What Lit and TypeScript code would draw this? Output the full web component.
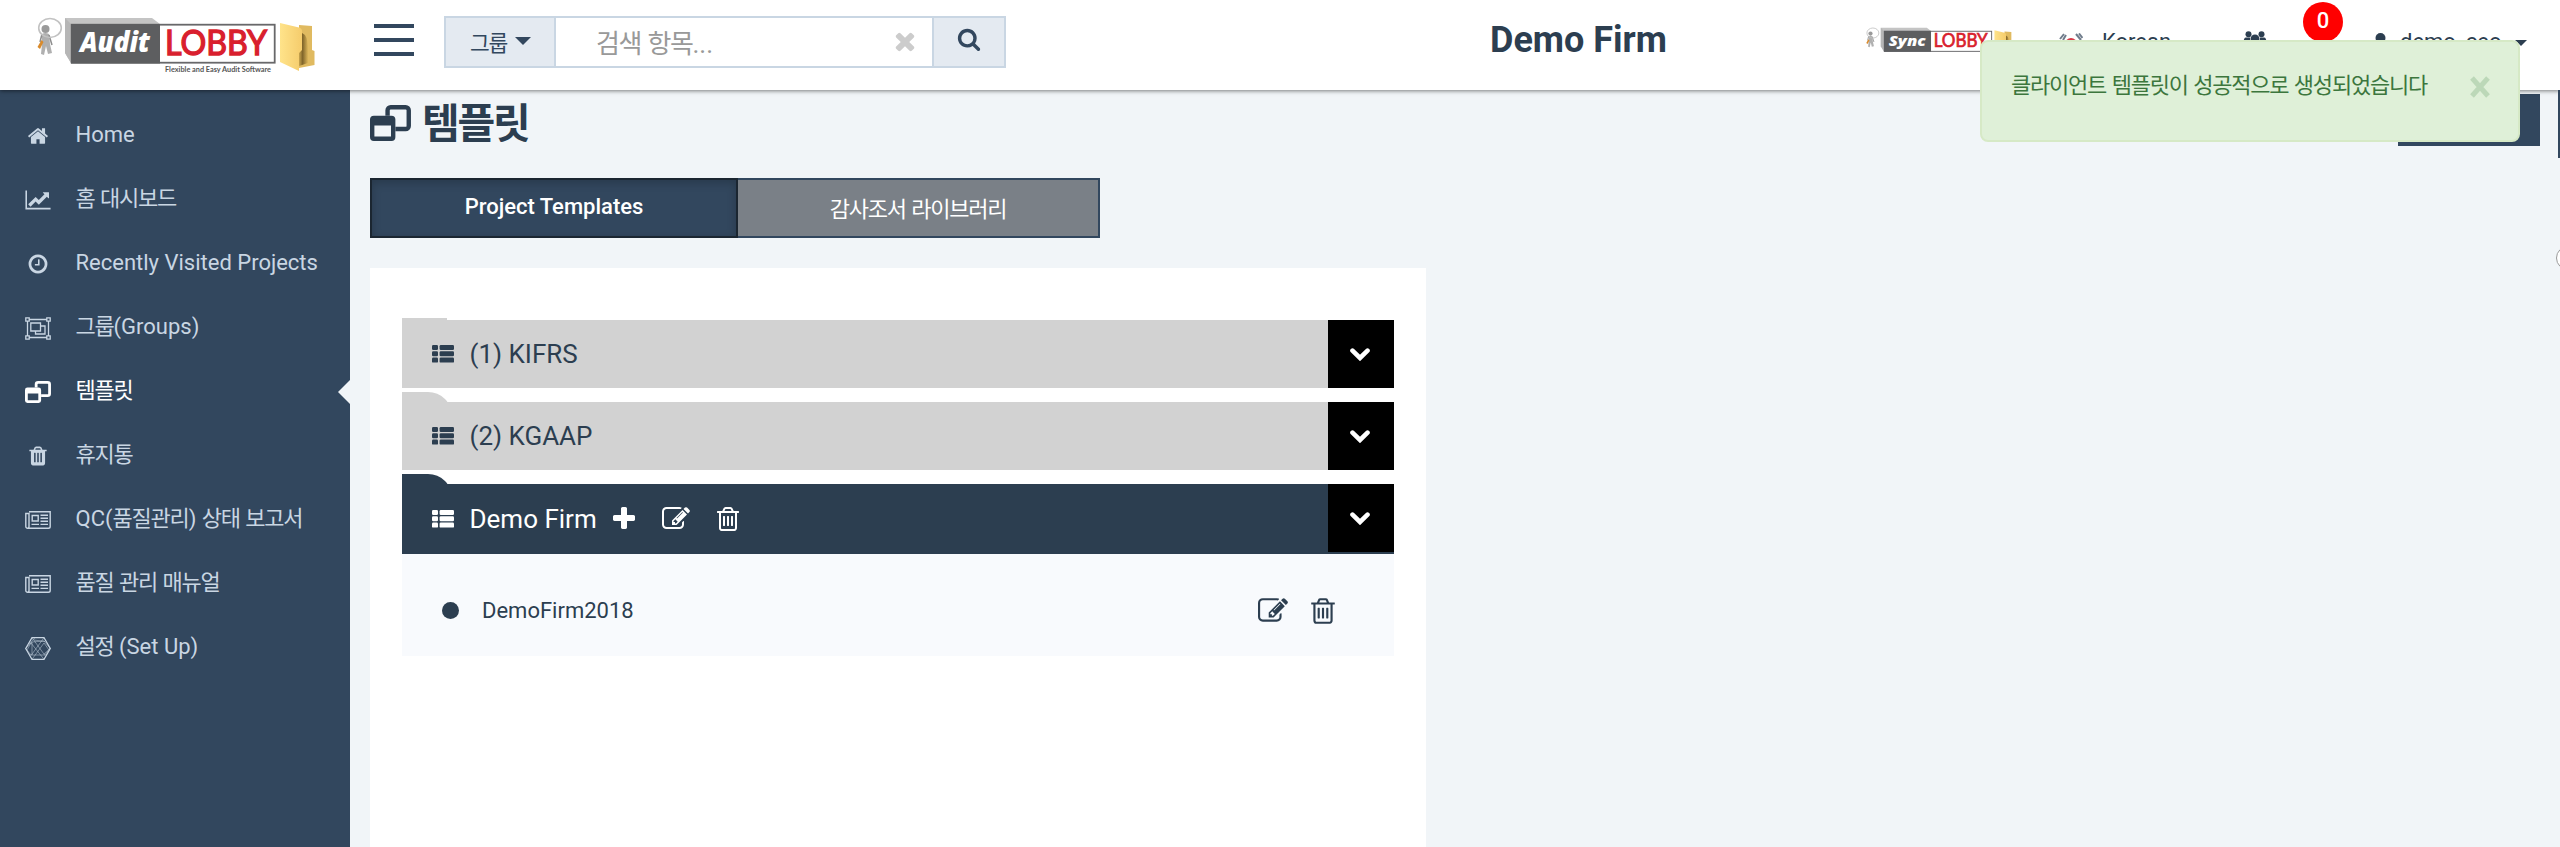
import { LitElement, html, svg, css } from "lit";
import { customElement, property } from "lit/decorators.js";

const TRASH_TAIL =
  "m-672-1076h448l-48-117q-7-9-17-11h-317q-10 2-17 11zm928 32v64q0 14-9 23t-23 9h-96v948q0 83-47 143.5t-113 60.5h-832q-66 0-113-58.5t-47-141.5v-952h-96q-14 0-23-9t-9-23v-64q0-14 9-23t23-9h309l70-167q15-37 54-63t79-26h320q40 0 79 26t54 63l70 167h309q14 0 23 9t9 23z";

const PATHS: Record<string, string> = {
  home: "M1472 992v480q0 26-19 45t-45 19h-384v-384h-256v384h-384q-26 0-45-19t-19-45v-480q0-1 .5-3t.5-3l575-474 575 474q1 2 1 6zm223-69l-62 74q-8 9-21 11h-3q-13 0-21-7l-692-577-692 577q-12 8-24 7-13-2-21-11l-62-74q-8-10-7-23.5t11-21.5l719-599q32-26 76-26t76 26l244 204v-195q0-14 9-23t23-9h192q14 0 23 9t9 23v408l219 182q10 8 11 21.5t-7 23.5z",
  clock: "M1024 544v448q0 14-9 23t-23 9h-320q-14 0-23-9t-9-23v-64q0-14 9-23t23-9h224v-352q0-14 9-23t23-9h64q14 0 23 9t9 23zm416 352q0-148-73-273t-198-198-273-73-273 73-198 198-73 273 73 273 198 198 273 73 273-73 198-198 73-273zm224 0q0 209-103 385.5t-279.5 279.5-385.5 103-385.5-103-279.5-279.5-103-385.5 103-385.5 279.5-279.5 385.5-103 385.5 103 279.5 279.5 103 385.5z",
  trash: "M704 1376v-704q0-14-9-23t-23-9h-64q-14 0-23 9t-9 23v704q0 14 9 23t23 9h64q14 0 23-9t9-23zm256 0v-704q0-14-9-23t-23-9h-64q-14 0-23 9t-9 23v704q0 14 9 23t23 9h64q14 0 23-9t9-23zm256 0v-704q0-14-9-23t-23-9h-64q-14 0-23 9t-9 23v704q0 14 9 23t23 9h64q14 0 23-9t9-23zM1344 1460" + TRASH_TAIL,
  trashO: "M704 736v576q0 14-9 23t-23 9h-64q-14 0-23-9t-9-23v-576q0-14 9-23t23-9h64q14 0 23 9t9 23zm256 0v576q0 14-9 23t-23 9h-64q-14 0-23-9t-9-23v-576q0-14 9-23t23-9h64q14 0 23 9t9 23zm256 0v576q0 14-9 23t-23 9h-64q-14 0-23-9t-9-23v-576q0-14 9-23t23-9h64q14 0 23 9t9 23zm128 724v-948h-896v948q0 22 7 40.5t14.5 27 10.5 8.5h832q3 0 10.5-8.5t14.5-27 7-40.5z" + TRASH_TAIL,
  plus: "M1600 736v192q0 40-28 68t-68 28h-416v416q0 40-28 68t-68 28h-192q-40 0-68-28t-28-68v-416h-416q-40 0-68-28t-28-68v-192q0-40 28-68t68-28h416v-416q0-40 28-68t68-28h192q40 0 68 28t28 68v416h416q40 0 68 28t28 68z",
  edit: "M888 1184l116-116-152-152-116 116v56h96v96h56zm440-720q-16-16-33 1l-350 350q-17 17-1 33t33-1l350-350q17-17 1-33zm80 594v190q0 119-84.5 203.5t-203.5 84.5h-832q-119 0-203.5-84.5t-84.5-203.5v-832q0-119 84.5-203.5t203.5-84.5h832q63 0 117 25 15 7 18 23 3 17-9 29l-49 49q-14 14-32 8-23-6-45-6h-832q-66 0-113 47t-47 113v832q0 66 47 113t113 47h832q66 0 113-47t47-113v-126q0-13 9-22l64-64q15-15 35-7t20 29zm-96-738l288 288-672 672h-288v-288zm444 132l-92 92-288-288 92-92q28-28 68-28t68 28l152 152q28 28 28 68t-28 68z",
  search: "M1216 832q0-185-131.5-316.5t-316.5-131.5-316.5 131.5-131.5 316.5 131.5 316.5 316.5 131.5 316.5-131.5 131.5-316.5zm512 832q0 52-38 90t-90 38q-54 0-90-38l-343-342q-179 124-399 124-143 0-273.5-55.5t-225-150-150-225-55.5-273.5 55.5-273.5 150-225 225-150 273.5-55.5 273.5 55.5 225 150 150 225 55.5 273.5q0 220-124 399l343 343q37 37 37 90z",
  times: "M1490 1322q0 40-28 68l-136 136q-28 28-68 28t-68-28l-294-294-294 294q-28 28-68 28t-68-28l-136-136q-28-28-28-68t28-68l294-294-294-294q-28-28-28-68t28-68l136-136q28-28 68-28t68 28l294 294 294-294q28-28 68-28t68 28l136 136q28 28 28 68t-28 68l-294 294 294 294q28 28 28 68z",
};

const CHART =
  "M2048 1536v128h-2048v-1536h128v1408h1920zm-128-1248v435q0 21-19.5 29.5t-35.5-7.5l-121-121-633 633q-10 10-23 10t-23-10l-233-233-416 416-192-192 585-585q10-10 23-10t23 10l233 233 464-464-121-121q-16-16-7.5-35.5t29.5-19.5h435q14 0 23 9t9 23z";

/** Square glyph on the 1792-unit grid. */
const glyph = (name: string, size: number) =>
  html`<svg width=${size} height=${size} viewBox="0 0 1792 1792" fill="currentColor"><path d=${PATHS[name]} /></svg>`;

const chart = html`<svg width="26" height="22" viewBox="0 0 2048 1792" fill="currentColor"><path d=${CHART} /></svg>`;

/** Two overlapping windows. */
const windows = (w: number, h: number) => html`<svg width=${w} height=${h} viewBox="0 0 42 37" preserveAspectRatio="none">
  <path d="M18 11V5.5A3.2 3.2 0 0 1 21.2 2.300H36.500A3.200 3.200 0 0 1 39.700 5.500V21.500A3.200 3.200 0 0 1 36.500 24.700H26" fill="none" stroke="currentColor" stroke-width="4.500" />
  <path fill-rule="evenodd" fill="currentColor" d="M4 11H22A4 4 0 0 1 26 15V33A4 4 0 0 1 22 37H4A4 4 0 0 1 0 33V15A4 4 0 0 1 4 11ZM4.500 21V32.500H21.500V21Z" />
</svg>`;

const objectGroup = html`<svg width="26" height="23" viewBox="0 0 26 23" fill="none" stroke="currentColor" stroke-width="1.300">
  <path d="M4 2.500H22M4 20.500H22M2.500 4V19M23.500 4V19" />
  <path d="M.8.8H4.200V4.200H.8ZM21.800.8H25.200V4.200H21.800ZM.8 18.800H4.200V22.200H.8ZM21.800 18.800H25.200V22.200H21.800Z" />
  <path d="M5.800 6H15.500V14H5.800ZM15.500 9H20V17H10.500V14" />
</svg>`;

const newspaper = html`<svg width="26" height="18" viewBox="0 0 26 18" fill="none" stroke="currentColor" stroke-width="1.400">
  <path d="M4 .8H25.200V15.400A1.800 1.800 0 0 1 23.400 17.200H2.600A1.800 1.800 0 0 1 .8 15.400V2.500H4V15.500A1.600 1.600 0 0 1 2.500 17.200" />
  <path d="M7.200 4.500H13.200V10H7.200ZM15.500 4.300H23M15.500 7.300H23M15.500 10.300H23M6.500 13.400H14M15.500 13.400H23" />
</svg>`;

const hexagon = html`<svg width="26" height="23" viewBox="0 0 26 23" fill="none" stroke="currentColor">
  <path stroke-width="1.200" d="M7 .7H19L25.300 11.500L19 22.300H7L.7 11.500Z" />
  <path stroke-width=".5" d="M7 .7L20 18.500M19 .7L6 18.500M.7 11.500L7 5L19 4L25.300 11.500L19 17M6 18L.7 11.500M7 22.300L19 6L24 13M19 22.300L6 6L2 13M7 5V18M10 .7L4 7M9 3L20 4.500M6 18H20L25 11" />
</svg>`;

const list = html`<svg width="22" height="18" viewBox="0 0 22 18" fill="currentColor">
  ${[0, 6.3, 12.6].map((y) => svg`<rect x="0" y=${y} width="6" height="5" rx="1.200" /><rect x="7.600" y=${y} width="14.400" height="5" rx="1.200" />`)}
</svg>`;

const chevron = html`<svg width="20" height="13" viewBox="0 0 20 13" fill="none" stroke="currentColor" stroke-width="4.600" stroke-linecap="round"><path stroke-linejoin="miter" d="M2.500 2.700L10 10L17.500 2.700" /></svg>`;

const caret = (w: number) => html`<svg width=${w} height=${w / 2} viewBox="0 0 16 8" fill="currentColor"><path d="M0 0H16L8 8Z" /></svg>`;

const ICONS: Record<string, unknown> = {
  home: glyph("home", 22), chart, clock: glyph("clock", 22), group: objectGroup,
  windows: windows(26, 22), trash: glyph("trash", 22), news: newspaper, hex: hexagon,
};

/** Wraps each Hangul run so that it is tracked more tightly than the Latin text round it. */
const text = (s: string) =>
  s.split(/([\uac00-\ud7a3]+)/).map((part, i) => (i % 2 ? html`<span class="ko">${part}</span>` : part));

const base = css`
  * { box-sizing: border-box; }
  svg { display: block; flex: none; }
  .ko { letter-spacing: -0.055em; font-weight: inherit; }
`;

@customElement("brand-logo")
class BrandLogo extends LitElement {
  @property() word = "Audit";
  @property() tag = "";
  static styles = css`
    :host { display: block; }
    svg { display: block; overflow: visible; width: 100%; height: 100%; }
    .word { font: italic 800 28px "Open Sans", sans-serif; fill: #fff; }
    .lobby { font: 400 34.500px "Lato", sans-serif; fill: #d91f2e; stroke: #d91f2e; stroke-width: 1.4; }
    .tag { font: 700 8px "Lato", sans-serif; fill: #555; }
  `;
  render() {
    return html`<svg viewBox="0 0 280 56">
      <defs>
        <linearGradient id="f" x1="0" x2="1"><stop offset="0" stop-color="#ffe38a" /><stop offset="1" stop-color="#f5cc6c" /></linearGradient>
        <linearGradient id="d" x1="0" x2="1"><stop offset="0" stop-color="#c9a650" /><stop offset=".4" stop-color="#80652a" /><stop offset="1" stop-color="#dcb65a" /></linearGradient>
      </defs>
      <path d="M5 17Q8 15 12 17L13 27L15 36L11 37L9 29L7 38L4 37L5 27Z" fill="#b0b0b0" />
      <path d="M5 17L3 25M12 18L15 28" stroke="#8d8d8d" stroke-width="1.500" />
      <circle cx="8.500" cy="12" r="4" fill="#9a9a9a" />
      <ellipse cx="13" cy="11" rx="11.300" ry="9.500" fill="none" stroke="#c2c2c2" stroke-width="1.600" />
      <path d="M4.500 23L.5 30L3 32L6.500 25Z" fill="#d98a2b" />
      <path d="M28 1H115L123 7H34V46L28 36Z" fill="#c4c4c4" />
      <path d="M28 1L34 7V46L28 36Z" fill="#b6b6b6" />
      <rect x="34.700" y="7.700" width="203" height="38" fill="#fff" stroke="#68686a" stroke-width="1.800" />
      <rect x="34" y="7" width="89" height="39.500" fill="#5d5e60" />
      <text class="word" x="43" y="35.200" textLength="70" lengthAdjust="spacingAndGlyphs">${this.word}</text>
      <text class="lobby" x="128" y="38" textLength="102" lengthAdjust="spacingAndGlyphs">LOBBY</text>
      ${this.tag ? svg`<text class="tag" x="128" y="54.500" textLength="106" lengthAdjust="spacingAndGlyphs">${this.tag}</text>` : ""}
      <path d="M262 8L275 9V33L277.500 34V48L262 51Z" fill="#e0ba60" />
      <path d="M262 14L268 18Q271 22 271 34V46L262 49Z" fill="url(#d)" />
      <path d="M243 6L262 10.500Q265 11.500 265 14V33L262 36V54L243 45Z" fill="url(#f)" />
    </svg>`;
  }
}

@customElement("top-bar")
class TopBar extends LitElement {
  static styles = [base, css`
    :host { display: flex; align-items: flex-start; height: 90px; background: #fff; color: #2c3e50; position: relative; z-index: 2; box-shadow: 0 1px 4px rgba(0, 0, 0, 0.5); padding-left: 37px; font-size: 22px; }
    .brand { width: 280px; height: 56px; margin: 17px 57px 0 0; }
    .burger { width: 40px; height: 32px; margin: 24px 30px 0 0; display: flex; flex-direction: column; justify-content: space-between; }
    .bar { height: 4px; background: #32475e; }
    .search { display: flex; width: 562px; height: 52px; margin-top: 16px; border: 2px solid #c9d6e3; color: #32475e; }
    .scope { width: 110px; background: #e4eaf1; border-right: 2px solid #c9d6e3; display: flex; align-items: center; gap: 8px; padding: 0 0 2px 24px; font-size: 21.500px; }
    .field { flex: 1; display: flex; align-items: center; justify-content: space-between; padding: 0 13px 2px 40px; color: #999; font-size: 26px; }
    .clear { color: #ccc; }
    .go { width: 72px; background: #e4eaf1; border-left: 2px solid #c9d6e3; display: flex; justify-content: center; padding: 9px 0 0; }
    .firm { margin: 16px 0 0 484px; width: 376px; font-size: 36px; line-height: 48px; font-weight: 700; }
    .sync { width: 148px; height: 30px; margin-top: 27px; }
    .lang { display: flex; gap: 19px; margin: 27px 0 0 45px; width: 184px; line-height: 30px; }
    .flag { margin-top: 6px; }
    .people { margin-top: 31px; width: 56px; }
    .bell { position: relative; width: 74px; margin-top: 36px; }
    .badge { position: absolute; left: 4px; top: -34px; width: 40px; height: 40px; border-radius: 50%; background: #f00; color: #fff; font-size: 22px; font-weight: 500; line-height: 37px; text-align: center; }
    .bellicon { margin-left: 12px; }
    .user { display: flex; margin-top: 27px; line-height: 30px; }
    .head { margin: 6px 13px 0 1px; }
    .caret { margin: 13px 0 0 13px; }
  `];
  render() {
    return html`
      <brand-logo class="brand" word="Audit" tag="Flexible and Easy Audit Software"></brand-logo>
      <div class="burger"><div class="bar"></div><div class="bar"></div><div class="bar"></div></div>
      <div class="search">
        <div class="scope"><span>${text("그룹")}</span>${caret(16)}</div>
        <div class="field"><span>${text("검색 항목...")}</span><span class="clear">${glyph("times", 28)}</span></div>
        <div class="go">${glyph("search", 24)}</div>
      </div>
      <div class="firm">Demo Firm</div>
      <brand-logo class="sync" word="Sync"></brand-logo>
      <div class="lang">
        <svg class="flag" width="24" height="18" viewBox="0 0 24 18"><path d="M1 6L5 1M4 7L7 2M17 1L22 7M20 .5L23.500 5" stroke="#6f7c8b" stroke-width="2" /><path d="M6 11A6 6 0 0 1 18 11Z" fill="#d63a46" /><path d="M6 11A6 6 0 0 0 18 11Z" fill="#2b5aa0" /></svg>
        <span>Korean</span>
      </div>
      <svg class="people" width="56" height="20" viewBox="0 0 56 20" fill="currentColor"><circle cx="5.500" cy="3.300" r="3" /><circle cx="18.500" cy="3.300" r="3" /><circle cx="12" cy="8" r="4.500" /><path d="M.5 12Q.5 6.500 3 6.500H7Q6.500 9 8 12ZM23.500 12Q23.500 6.500 21 6.500H17Q17.500 9 16 12Z" /></svg>
      <div class="bell">
        <svg class="bellicon" width="22" height="22" viewBox="0 0 22 22" fill="currentColor"><path d="M11 0Q18 1 18 9L21 17H1L4 9Q4 1 11 0Z" /></svg>
        <div class="badge">0</div>
      </div>
      <div class="user">
        <svg class="head" width="13" height="20" viewBox="0 0 13 20" fill="currentColor"><circle cx="6.500" cy="5" r="5" /><path d="M0 20V14Q0 10 6.500 10T13 14V20Z" /></svg>
        <span>demo_ceo</span><span class="caret">${caret(12)}</span>
      </div>`;
  }
}

@customElement("side-nav")
class SideNav extends LitElement {
  static styles = [base, css`
    :host { display: block; width: 350px; background: #32475e; color: #c9d6e3; padding-top: 13px; font-size: 22px; }
    .item { display: flex; align-items: center; height: 64px; position: relative; white-space: nowrap; }
    .icon { width: 75.5px; display: flex; justify-content: center; padding-top: 2px; }
    .label { line-height: 30px; }
    .active { color: #fff; }
    .active::after { content: ""; position: absolute; right: 0; top: 21px; border: 12px solid transparent; border-left-width: 0; border-right-color: #f1f5f8; }
  `];
  private items: [string, string][] = [
    ["home", "Home"], ["chart", "홈 대시보드"], ["clock", "Recently Visited Projects"],
    ["group", "그룹(Groups)"], ["windows", "템플릿"], ["trash", "휴지통"],
    ["news", "QC(품질관리) 상태 보고서"], ["news", "품질 관리 매뉴얼"], ["hex", "설정 (Set Up)"],
  ];
  render() {
    return this.items.map(([icon, label]) => html`<div class="item ${icon === "windows" ? "active" : ""}">
      <span class="icon">${ICONS[icon]}</span><span class="label">${text(label)}</span>
    </div>`);
  }
}

@customElement("template-row")
class TemplateRow extends LitElement {
  @property() label = "";
  @property({ type: Boolean, reflect: true }) open = false;
  @property({ type: Boolean, reflect: true }) first = false;
  static styles = [base, css`
    :host { display: flex; height: 68px; margin-bottom: 14px; background: #d2d2d2; color: #2c3e50; position: relative; font-size: 26px; }
    :host::before { content: ""; position: absolute; left: 0; top: -10px; width: 50px; height: 40px; border-top-right-radius: 24px; background: inherit; clip-path: inset(0 4px 0 0); }
    :host([first])::before { top: -2px; width: 49px; border-top-right-radius: 4px; }
    :host([open]) { height: 70px; margin-bottom: 0; background: #2c3e50; color: #fff; }
    .title { flex: 1; display: flex; align-items: center; padding-left: 30px; position: relative; }
    .name { margin-left: 15.5px; }
    .acts { display: flex; gap: 24px; margin-left: 13.5px; }
    .toggle { width: 66px; height: 68px; background: #000; color: #fff; display: flex; align-items: center; justify-content: center; padding-right: 2px; }
  `];
  render() {
    return html`<div class="title">${list}<span class="name">${this.label}</span>
        ${this.open ? html`<span class="acts">${glyph("plus", 28)}${glyph("edit", 28)}${glyph("trashO", 28)}</span>` : ""}
      </div><div class="toggle">${chevron}</div>`;
  }
}

@customElement("app-root")
class AppRoot extends LitElement {
  static styles = [base, css`
    :host { display: flex; flex-direction: column; height: 847px; overflow: hidden; position: relative; background: #f1f5f8; color: #2c3e50; font-family: "Roboto", "Noto Sans CJK KR", sans-serif; font-size: 22px; }
    .body { flex: 1; display: flex; min-height: 0; }
    .main { flex: 1; display: flex; flex-direction: column; align-items: flex-start; padding: 4px 20px 0; }
    .head { align-self: stretch; display: flex; justify-content: space-between; height: 84px; }
    .title { display: flex; gap: 11px; margin-top: 3px; font-size: 41px; font-weight: 700; line-height: 54px; }
    .title svg { margin-top: 8px; }
    .create { width: 142px; height: 52px; background: #32475e; }
    .tabs { display: flex; width: 730px; height: 60px; margin-bottom: 30px; color: #fff; }
    .tab { flex: 1; border: 2px solid #32475e; border-left: 0; background: #7a8087; display: flex; align-items: center; justify-content: center; padding-bottom: 3px; }
    .tab.on { flex: none; width: 368px; background: #32475e; border: 2px solid #1b2631; font-weight: 500; box-shadow: inset 0 3px 10px rgba(0, 0, 0, 0.2); }
    .panel { flex: 1; width: 1056px; background: #fff; padding: 52px 32px 0; }
    .child { display: flex; align-items: center; height: 102px; background: #f8fafd; padding: 11px 56px 0 40px; }
    .dot { width: 17px; height: 17px; border-radius: 50%; background: #2c3e50; margin-right: 23px; }
    .grow { flex: 1; }
    .acts { display: flex; gap: 20px; }
    .toast { position: absolute; z-index: 3; left: 1980px; top: 40px; width: 540px; height: 102px; border: 2px solid #d6e9c6; border-radius: 8px; background: #dff0d8; color: #3c763d; display: flex; justify-content: space-between; padding: 27px 22px 0 29px; line-height: 34px; }
    .close { color: #bcd8b8; margin-top: 6px; }
    .edge { position: absolute; z-index: 3; right: 0; top: 90px; width: 2px; height: 68px; background: #32475e; }
    .knob { position: absolute; left: 2556px; top: 246px; width: 24px; height: 24px; border: 1.5px solid #999; border-radius: 50%; background: #fff; }
  `];
  render() {
    return html`
      <top-bar></top-bar>
      <div class="body">
        <side-nav></side-nav>
        <div class="main">
          <div class="head">
            <div class="title">${windows(41, 36)}<span>${text("템플릿")}</span></div>
            <div class="create"></div>
          </div>
          <div class="tabs">
            <div class="tab on">Project Templates</div>
            <div class="tab"><span>${text("감사조서 라이브러리")}</span></div>
          </div>
          <div class="panel">
            <template-row first label="(1) KIFRS"></template-row>
            <template-row label="(2) KGAAP"></template-row>
            <template-row open label="Demo Firm"></template-row>
            <div class="child">
              <span class="dot"></span><span class="grow">DemoFirm2018</span>
              <span class="acts">${glyph("edit", 30)}${glyph("trashO", 30)}</span>
            </div>
          </div>
        </div>
      </div>
      <div class="toast"><span>${text("클라이언트 템플릿이 성공적으로 생성되었습니다")}</span>
        <svg class="close" width="32" height="24" viewBox="0 0 32 24" stroke="currentColor" stroke-width="5"><path d="M8 3L24 21M24 3L8 21" /></svg></div>
      <div class="edge"></div>
      <div class="knob"></div>`;
  }
}
